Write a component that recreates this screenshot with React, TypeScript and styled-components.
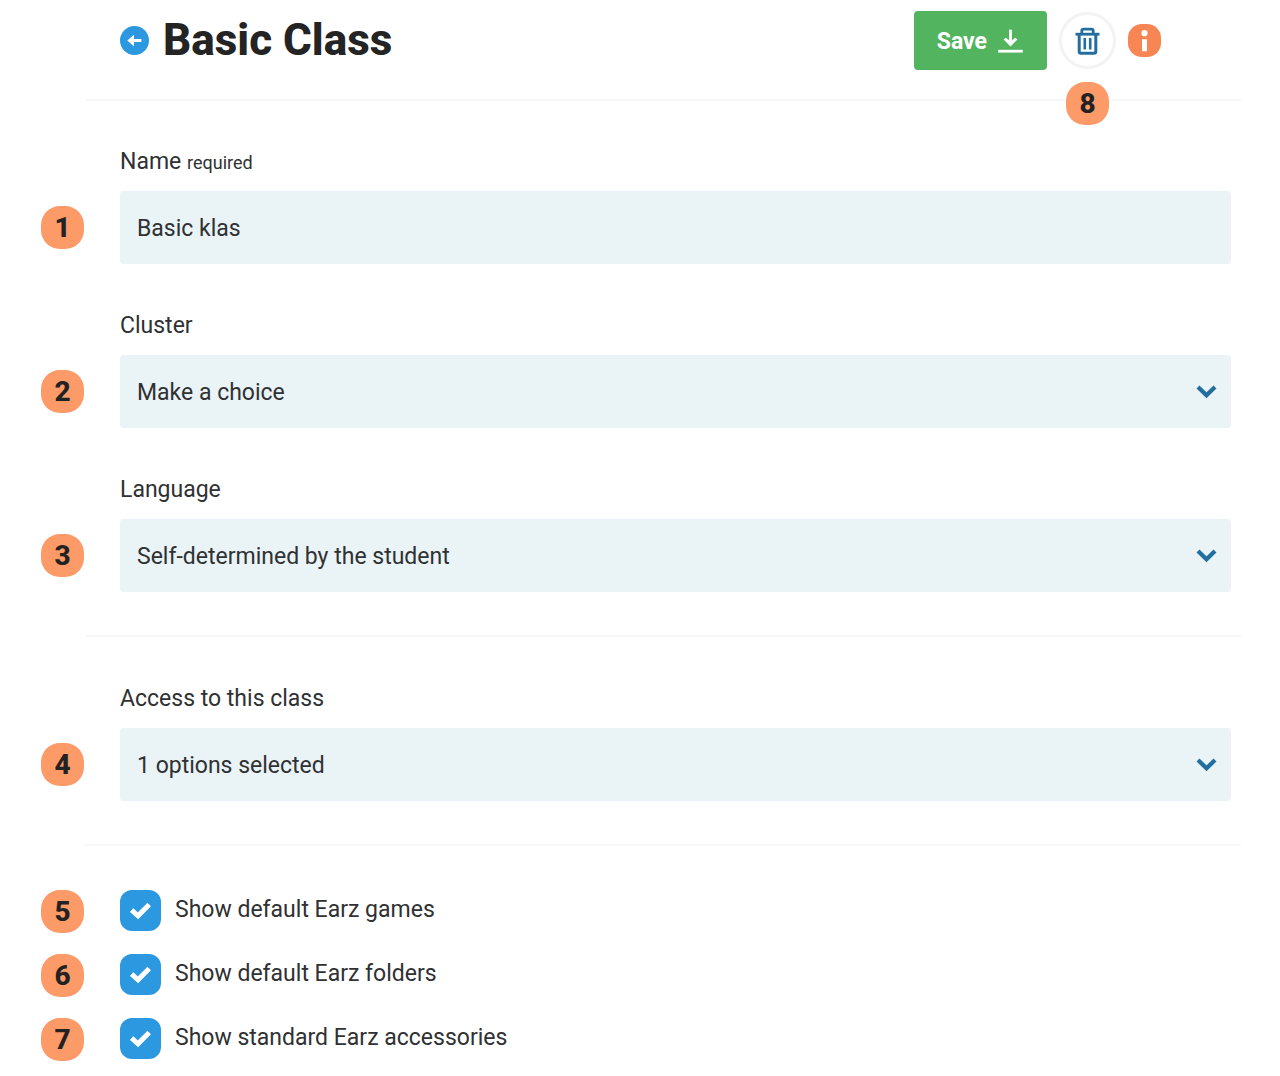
import React, { useState } from "react";
import styled, { createGlobalStyle } from "styled-components";

const ink = "#2f3133";
const blue = "#2c98df";
const deepBlue = "#226f9f";

const GlobalStyle = createGlobalStyle`
  *, *::before, *::after { box-sizing: border-box; }
  body {
    margin: 0;
    background: #fff;
    color: ${ink};
    font-family: Roboto, "Liberation Sans", sans-serif;
    font-size: 23px;
    line-height: 30px;
  }
  button, input, select { font: inherit; color: inherit; }
`;

const Page = styled.main`
  padding: 0 39px 14px 41px;
`;

const Header = styled.header`
  display: flex;
  align-items: center;
  justify-content: space-between;
  padding: 11px 80px 29px 79px;
`;

const TitleGroup = styled.div`
  display: flex;
  align-items: center;
  gap: 14px;
`;

const BackLink = styled.a`
  display: flex;
  width: 29px;
  height: 29px;
`;

const Title = styled.h1`
  margin: 0;
  padding-bottom: 2px;
  color: #242424;
  font-size: 44px;
  font-weight: 800;
  line-height: 56px;
`;

const Actions = styled.div`
  display: flex;
  align-items: center;
  gap: 12px;
`;

const SaveButton = styled.button`
  display: flex;
  align-items: center;
  gap: 11px;
  height: 59px;
  padding: 2px 24px 0 23px;
  border: 0;
  border-radius: 4px;
  background: #52b45f;
  color: #fff;
  font-weight: 700;
  cursor: pointer;
`;

const DeleteWrap = styled.div`
  position: relative;
  display: flex;
  justify-content: center;
`;

const DeleteButton = styled.button`
  display: flex;
  align-items: center;
  justify-content: center;
  width: 57px;
  height: 57px;
  padding: 0;
  border: 3px solid #f3f3f4;
  border-radius: 50%;
  background: #fff;
  cursor: pointer;
`;

const InfoButton = styled.button`
  display: flex;
  width: 33px;
  height: 33px;
  padding: 0;
  border: 0;
  border-radius: 14px;
  background: #f88654;
  cursor: pointer;
`;

const Badge = styled.span`
  display: flex;
  align-items: center;
  justify-content: center;
  width: 43px;
  height: 43px;
  border-radius: 19px;
  background: #fc9a68;
  color: #222;
  font-size: 28px;
  font-weight: 800;
`;

const HangingBadge = styled(Badge)`
  position: absolute;
  top: 70px;
`;

const Divider = styled.hr`
  height: 2px;
  margin: 0 0 0 44px;
  border: 0;
  background: #f7f7f7;
`;

const Section = styled.section<{ $top: number; $gap: number }>`
  display: flex;
  flex-direction: column;
  gap: ${(p) => p.$gap}px;
  padding: ${(p) => p.$top}px 10px 43px 0;
`;

const FieldRow = styled.div`
  display: grid;
  grid-template-columns: 43px minmax(0, 1fr);
  column-gap: 36px;
  row-gap: 14px;
  align-items: center;
`;

const FieldLabel = styled.label`
  grid-column: 2;
`;

const Required = styled.small`
  font-size: 18px;
  line-height: 1;
`;

const TextInput = styled.input`
  width: 100%;
  height: 73px;
  padding: 2px 17px 0;
  border: 0;
  border-radius: 4px;
  background: #eaf3f6;
`;

const SelectBox = styled.div`
  display: grid;
  align-items: center;

  > * {
    grid-area: 1 / 1;
  }

  > svg {
    justify-self: end;
    margin-right: 14px;
    pointer-events: none;
  }
`;

const Select = styled.select`
  appearance: none;
  width: 100%;
  height: 73px;
  padding: 2px 48px 0 17px;
  border: 0;
  border-radius: 4px;
  background: #eaf3f6;
  cursor: pointer;
`;

const CheckRow = styled.div`
  display: grid;
  grid-template-columns: 43px minmax(0, 1fr);
  column-gap: 36px;
  align-items: start;
`;

const CheckLabel = styled.label`
  display: flex;
  align-items: flex-start;
  gap: 14px;
  cursor: pointer;
`;

const CheckText = styled.span`
  line-height: 40px;
`;

const CheckControl = styled.span`
  display: grid;
  place-items: center;

  > * {
    grid-area: 1 / 1;
  }

  > svg {
    pointer-events: none;
  }
`;

const CheckInput = styled.input`
  appearance: none;
  width: 41px;
  height: 41px;
  margin: 0;
  border: 2px solid ${blue};
  border-radius: 12px;
  background: #fff;
  cursor: pointer;

  &:checked {
    background: ${blue};
  }
`;

const BackIcon = () => (
  <svg width="29" height="29" viewBox="0 0 29 29" aria-hidden="true">
    <circle cx="14.5" cy="14.5" r="14.5" fill={blue} />
    <path d="M7.3 14.5 14 8.8V13H21.4V16H14V20.4Z" fill="#fff" />
  </svg>
);

const SaveIcon = () => (
  <svg width="25" height="26" viewBox="0 0 25 26" fill="none" stroke="#fff" aria-hidden="true">
    <path d="M12.5 0.6V14" strokeWidth="2.8" />
    <path d="M5.6 10.6 12.5 17.6 19.4 10.6 17.2 8.8 12.5 12.4 7.8 8.8Z" fill="#fff" stroke="none" />
    <path d="M0.2 22.2H24.8" strokeWidth="2.8" />
  </svg>
);

const TrashIcon = () => (
  <svg width="25" height="28" viewBox="0 0 25 28" fill="none" stroke={deepBlue} aria-hidden="true">
    <path d="M0.5 7.2H24.5" strokeWidth="2.8" />
    <path d="M6.8 7V3.8Q6.8 2.1 8.5 2.1H16.5Q18.2 2.1 18.2 3.8V7" strokeWidth="2.8" />
    <path d="M4.2 7V24.4Q4.2 26.2 6 26.2H19Q20.8 26.2 20.8 24.4V7" strokeWidth="3" />
    <path d="M9.8 11V22.6M15.2 11V22.6" strokeWidth="2.6" />
  </svg>
);

const InfoIcon = () => (
  <svg width="33" height="33" viewBox="0 0 33 33" fill="#fff" aria-hidden="true">
    <circle cx="16.5" cy="9.2" r="3.1" />
    <rect x="14" y="15.2" width="5" height="12" rx="0.6" />
  </svg>
);

const ChevronIcon = () => (
  <svg width="21" height="14" viewBox="0 0 21 14" aria-hidden="true">
    <path d="M2 2 10.5 10.3 19 2" fill="none" stroke={deepBlue} strokeWidth="4.2" />
  </svg>
);

const CheckIcon = () => (
  <svg width="23" height="18" viewBox="0 0 23 18" aria-hidden="true">
    <path d="M2.6 8.2 9 13.8 20.2 2.6" fill="none" stroke="#fff" strokeWidth="5" />
  </svg>
);

const selects = [
  { id: "cluster", number: 2, label: "Cluster", value: "Make a choice" },
  { id: "language", number: 3, label: "Language", value: "Self-determined by the student" },
];

const toggles = [
  { id: "games", number: 5, label: "Show default Earz games" },
  { id: "folders", number: 6, label: "Show default Earz folders" },
  { id: "accessories", number: 7, label: "Show standard Earz accessories" },
];

interface SelectFieldProps {
  id: string;
  number: number;
  label: string;
  value: string;
}

function SelectField({ id, number, label, value }: SelectFieldProps) {
  return (
    <FieldRow>
      <FieldLabel htmlFor={id}>{label}</FieldLabel>
      <Badge>{number}</Badge>
      <SelectBox>
        <Select id={id} defaultValue={value}>
          <option value={value}>{value}</option>
        </Select>
        <ChevronIcon />
      </SelectBox>
    </FieldRow>
  );
}

function CheckField({ id, number, label }: { id: string; number: number; label: string }) {
  const [checked, setChecked] = useState(true);
  return (
    <CheckRow>
      <Badge>{number}</Badge>
      <CheckLabel htmlFor={id}>
        <CheckControl>
          <CheckInput
            id={id}
            type="checkbox"
            checked={checked}
            onChange={(event) => setChecked(event.target.checked)}
          />
          {checked && <CheckIcon />}
        </CheckControl>
        <CheckText>{label}</CheckText>
      </CheckLabel>
    </CheckRow>
  );
}

export default function App() {
  return (
    <>
      <GlobalStyle />
      <Page>
        <Header>
          <TitleGroup>
            <BackLink href="#" aria-label="Back">
              <BackIcon />
            </BackLink>
            <Title>Basic Class</Title>
          </TitleGroup>
          <Actions>
            <SaveButton type="button">
              Save
              <SaveIcon />
            </SaveButton>
            <DeleteWrap>
              <DeleteButton type="button" aria-label="Delete">
                <TrashIcon />
              </DeleteButton>
              <HangingBadge>8</HangingBadge>
            </DeleteWrap>
            <InfoButton type="button" aria-label="Information">
              <InfoIcon />
            </InfoButton>
          </Actions>
        </Header>
        <Divider />
        <Section $top={46} $gap={47}>
          <FieldRow>
            <FieldLabel htmlFor="name">
              Name <Required>required</Required>
            </FieldLabel>
            <Badge>1</Badge>
            <TextInput id="name" type="text" defaultValue="Basic klas" />
          </FieldRow>
          {selects.map((field) => (
            <SelectField key={field.id} {...field} />
          ))}
        </Section>
        <Divider />
        <Section $top={47} $gap={47}>
          <SelectField id="access" number={4} label="Access to this class" value="1 options selected" />
        </Section>
        <Divider />
        <Section $top={44} $gap={21}>
          {toggles.map((toggle) => (
            <CheckField key={toggle.id} {...toggle} />
          ))}
        </Section>
      </Page>
    </>
  );
}
